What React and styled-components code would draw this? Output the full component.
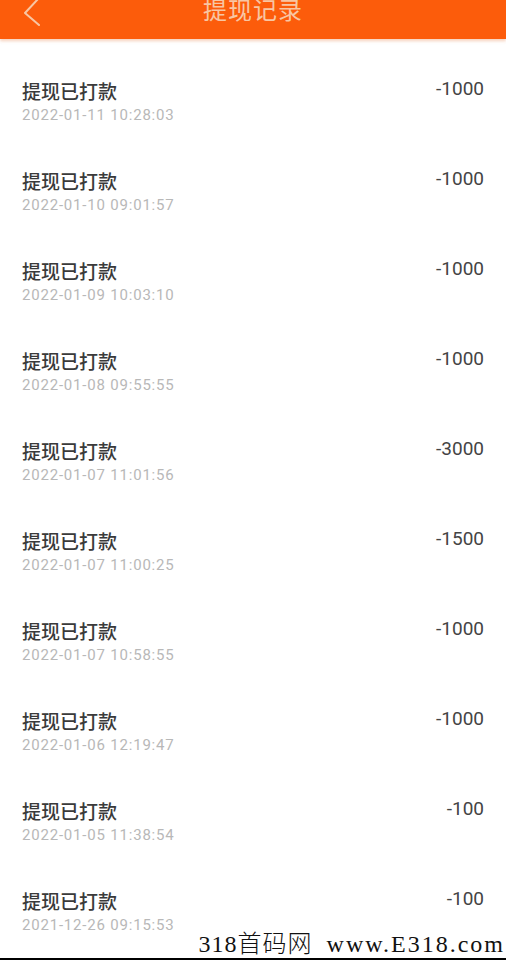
import styled, { createGlobalStyle } from "styled-components";

const GlobalStyle = createGlobalStyle`
  html, body {
    margin: 0;
    padding: 0;
    background: #fff;
  }
  body {
    font-family: Roboto, "Noto Sans CJK SC", sans-serif;
  }
`;

const Page = styled.div`
  position: relative;
  width: 506px;
  height: 960px;
  overflow: hidden;
  background: #fff;
`;

const Header = styled.header`
  height: 39px;
  background: #fc5c0b;
  box-shadow: 0 2px 3px rgba(230, 120, 60, 0.35);
  display: grid;
  grid-template-columns: 60px 1fr 60px;
  align-items: start;
  overflow: hidden;
`;

const Back = styled.div`
  padding-left: 22px;
  margin-top: -2px;
`;

const Title = styled.h1`
  margin: -6px 0 0;
  text-align: center;
  font-family: "Noto Sans CJK SC", sans-serif;
  font-weight: 400;
  font-size: 24px;
  line-height: 30px;
  letter-spacing: 1px;
  color: #f8c6a3;
`;

const List = styled.ul`
  list-style: none;
  margin: 0;
  padding: 0;
`;

const Row = styled.li`
  height: 90px;
  box-sizing: border-box;
  padding: 40px 22px 0 22px;
  display: flex;
  justify-content: space-between;
  align-items: flex-start;
`;

const Info = styled.div`
  display: flex;
  flex-direction: column;
`;

const Label = styled.span`
  font-family: "Noto Sans CJK SC", sans-serif;
  font-size: 19px;
  line-height: 24px;
  font-weight: 500;
  color: #3a3a3a;
`;

const Time = styled.span`
  margin-top: 3px;
  font-family: Roboto, sans-serif;
  font-size: 15px;
  line-height: 18px;
  letter-spacing: 0.8px;
  color: #b8b8b8;
`;

const Amount = styled.span`
  font-family: Roboto, sans-serif;
  font-size: 19px;
  line-height: 22px;
  color: #444;
  margin-top: -1px;
`;

const Watermark = styled.div`
  position: absolute;
  left: 0;
  right: 0;
  bottom: 0;
  border-bottom: 2px solid #000;
  display: flex;
  justify-content: flex-end;
  align-items: baseline;
  gap: 14px;
  padding-right: 1px;
  font-family: "Liberation Serif", "Noto Sans CJK SC", serif;
  font-size: 24px;
  line-height: 28px;
  color: #111;
  white-space: pre;
`;

const Mark = styled.span`
  letter-spacing: ${(p) => p.$spacing || 0}px;
  font-weight: 300;
`;

const records = [
  ["2022-01-11 10:28:03", "-1000"],
  ["2022-01-10 09:01:57", "-1000"],
  ["2022-01-09 10:03:10", "-1000"],
  ["2022-01-08 09:55:55", "-1000"],
  ["2022-01-07 11:01:56", "-3000"],
  ["2022-01-07 11:00:25", "-1500"],
  ["2022-01-07 10:58:55", "-1000"],
  ["2022-01-06 12:19:47", "-1000"],
  ["2022-01-05 11:38:54", "-100"],
  ["2021-12-26 09:15:53", "-100"],
];

function Chevron() {
  return (
    <svg width="20" height="28" viewBox="0 0 20 28" fill="none">
      <path
        d="M16 1 L3 15 L17 27"
        stroke="#f8c6a3"
        strokeWidth="2"
        strokeLinecap="round"
        strokeLinejoin="round"
      />
    </svg>
  );
}

export default function App() {
  return (
    <Page>
      <GlobalStyle />
      <Header>
        <Back>
          <Chevron />
        </Back>
        <Title>提现记录</Title>
        <div />
      </Header>
      <List>
        {records.map(([time, amount], i) => (
          <Row key={i}>
            <Info>
              <Label>提现已打款</Label>
              <Time>{time}</Time>
            </Info>
            <Amount>{amount}</Amount>
          </Row>
        ))}
      </List>
      <Watermark>
        <Mark $spacing={1}>318首码网</Mark>
        <Mark $spacing={2}>www.E318.com</Mark>
      </Watermark>
    </Page>
  );
}
